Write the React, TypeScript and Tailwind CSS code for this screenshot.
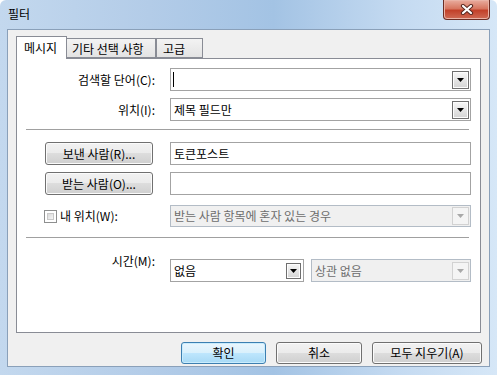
import React from "react";

const winBtn =
  "h-[22px] rounded-[3px] border border-[#707070] bg-[linear-gradient(#f2f2f2_0%,#ebebeb_49%,#dddddd_50%,#cfcfcf_100%)] shadow-[inset_0_0_0_1px_#fbfbfb] flex items-center justify-center text-[12px] leading-[16px] text-black";

function Arrow({ disabled }: { disabled?: boolean }) {
  return (
    <svg width="7" height="4" viewBox="0 0 7 4">
      <polygon points="0,0 7,0 3.5,4" fill={disabled ? "#a8a8a8" : "#000000"} />
    </svg>
  );
}

function DropBtn({ disabled, small }: { disabled?: boolean; small?: boolean }) {
  if (disabled) {
    return (
      <div className="w-[17px] h-[18px] border border-[#d2d2d2] bg-[#f4f4f4] flex items-center justify-center">
        <Arrow disabled />
      </div>
    );
  }
  return (
    <div
      className={`${small ? "w-[15px] h-[16px]" : "w-[17px] h-[18px]"} border border-[#6f6f6f] bg-[linear-gradient(#f7f7f7,#d4d4d4)] shadow-[inset_0_0_0_1px_#fdfdfd] flex items-center justify-center`}
    >
      <Arrow />
    </div>
  );
}

function CloseGlyph() {
  return (
    <svg width="14" height="11" viewBox="0 0 14 11">
      <path d="M3 2 L11 9 M11 2 L3 9" stroke="#5a2a22" strokeWidth="4.2" strokeLinecap="round" />
      <path d="M3 2 L11 9 M11 2 L3 9" stroke="#ffffff" strokeWidth="2.2" strokeLinecap="round" />
    </svg>
  );
}

export default function App() {
  return (
    <div className="w-[497px] h-[375px] flex flex-col overflow-hidden rounded-t-[6px] bg-[linear-gradient(90deg,#c3d8ee_0%,#b3cce8_30%,#a3c3e4_55%,#c4daf1_80%,#d6e7f7_100%)] font-['Noto_Sans_CJK_KR',sans-serif] text-[12px] leading-[16px] text-black">
      {/* Title bar */}
      <div className="h-[29px] flex justify-between pl-[8px] pr-[7px] shrink-0">
        <div className="pt-[6px] text-[12px] text-black">필터</div>
        <div className="w-[47px] h-[20px] rounded-b-[4px] border border-t-0 border-[#6b2d24] bg-[linear-gradient(#e9ad9f_0%,#d77660_45%,#c2412a_55%,#cf6b55_100%)] shadow-[inset_0_0_0_1px_#eab3a6] flex items-center justify-center">
          <CloseGlyph />
        </div>
      </div>

      {/* Client area */}
      <div className="flex-1 mx-[7px] mb-[8px] border border-[#8aa0b9] bg-[#f0f0f0] flex flex-col">
        {/* Tabs */}
        <div className="mt-[6px] ml-[8px] h-[22px] flex items-end relative z-10">
          <div className="h-[23px] -mb-px w-[51px] border border-b-0 border-[#898c95] bg-white pl-[7px] pt-[3px]">
            메시지
          </div>
          <div className="h-[20px] w-[89px] border border-l-0 border-[#898c95] bg-[linear-gradient(#f3f3f3,#e3e3e3)] pl-[5px] pt-[2px]">
            기타 선택 사항
          </div>
          <div className="h-[20px] w-[47px] border border-[#898c95] bg-[linear-gradient(#f3f3f3,#e3e3e3)] pl-[6px] pt-[2px]">
            고급
          </div>
        </div>

        {/* Tab panel */}
        <div className="mx-[8px] h-[275px] border border-[#898c95] bg-white flex flex-col shrink-0">
          {/* 검색할 단어 */}
          <div className="mt-[9px] h-[23px] flex items-center">
            <div className="w-[138px] mr-[15px] text-right">검색할 단어(C):</div>
            <div className="w-[301px] h-[23px] border border-[#a3a3a3] bg-white flex items-center justify-between pl-[2px] pr-px">
              <div className="w-px h-[15px] bg-black" />
              <DropBtn />
            </div>
          </div>

          {/* 위치 */}
          <div className="mt-[7px] h-[23px] flex items-center">
            <div className="w-[138px] mr-[15px] text-right">위치(I):</div>
            <div className="w-[301px] h-[23px] border border-[#a3a3a3] bg-white flex items-center justify-between pl-[3px] pr-px">
              <span>제목 필드만</span>
              <DropBtn />
            </div>
          </div>

          <div className="mt-[8px] ml-[9px] w-[443px] h-px bg-[#a0a0a0]" />

          {/* 보낸 사람 */}
          <div className="mt-[12px] h-[23px] flex items-center">
            <div className={`${winBtn} ml-[28px] w-[108px] h-[23px]`}>보낸 사람(R)...</div>
            <div className="ml-[17px] w-[301px] h-[23px] border border-[#a3a3a3] bg-white flex items-center pl-[3px]">
              토큰포스트
            </div>
          </div>

          {/* 받는 사람 */}
          <div className="mt-[7px] h-[23px] flex items-center">
            <div className={`${winBtn} ml-[28px] w-[108px] h-[23px]`}>받는 사람(O)...</div>
            <div className="ml-[17px] w-[301px] h-[23px] border border-[#a3a3a3] bg-white" />
          </div>

          {/* 내 위치 */}
          <div className="mt-[10px] h-[22px] flex items-center">
            <div className="w-[153px] pl-[27px] flex items-center">
              <div className="w-[13px] h-[13px] border border-[#8e8f8f] bg-white p-[2px]">
                <div className="w-full h-full bg-[linear-gradient(135deg,#d9d9d9,#f7f7f7)] border border-[#c9c9c9]" />
              </div>
              <span className="ml-[3px]">내 위치(W):</span>
            </div>
            <div className="w-[301px] h-[22px] border border-[#b3bcc6] bg-[#f0f0f0] flex items-center justify-between pl-[3px] pr-px text-[#6d6d6d]">
              <span>받는 사람 항목에 혼자 있는 경우</span>
              <DropBtn disabled />
            </div>
          </div>

          <div className="mt-[10px] ml-[9px] w-[443px] h-px bg-[#a0a0a0]" />

          {/* 시간 */}
          <div className="mt-[21px] h-[23px] flex items-start">
            <div className="w-[138px] mr-[15px] text-right -mt-[6px]">시간(M):</div>
            <div className="w-[134px] h-[23px] border border-[#a3a3a3] bg-white flex items-center justify-between pl-[3px] pr-[2px]">
              <span>없음</span>
              <DropBtn small />
            </div>
            <div className="ml-[7px] w-[160px] h-[23px] border border-[#b3bcc6] bg-[#f0f0f0] flex items-center justify-between pl-[3px] pr-px text-[#6d6d6d]">
              <span>상관 없음</span>
              <DropBtn disabled />
            </div>
          </div>
        </div>

        {/* Buttons */}
        <div className="mt-[9px] flex justify-end gap-[10px] pr-[7px]">
          <div className="w-[85px] h-[22px] rounded-[3px] border border-[#3c7fb1] bg-[linear-gradient(#eaf6fd_0%,#d9f0fc_49%,#bee6fd_50%,#a7d9f5_100%)] shadow-[inset_0_0_0_1px_#c9ecfd] flex items-center justify-center">
            확인
          </div>
          <div className={`${winBtn} w-[86px]`}>취소</div>
          <div className={`${winBtn} w-[110px]`}>모두 지우기(A)</div>
        </div>
      </div>
    </div>
  );
}
